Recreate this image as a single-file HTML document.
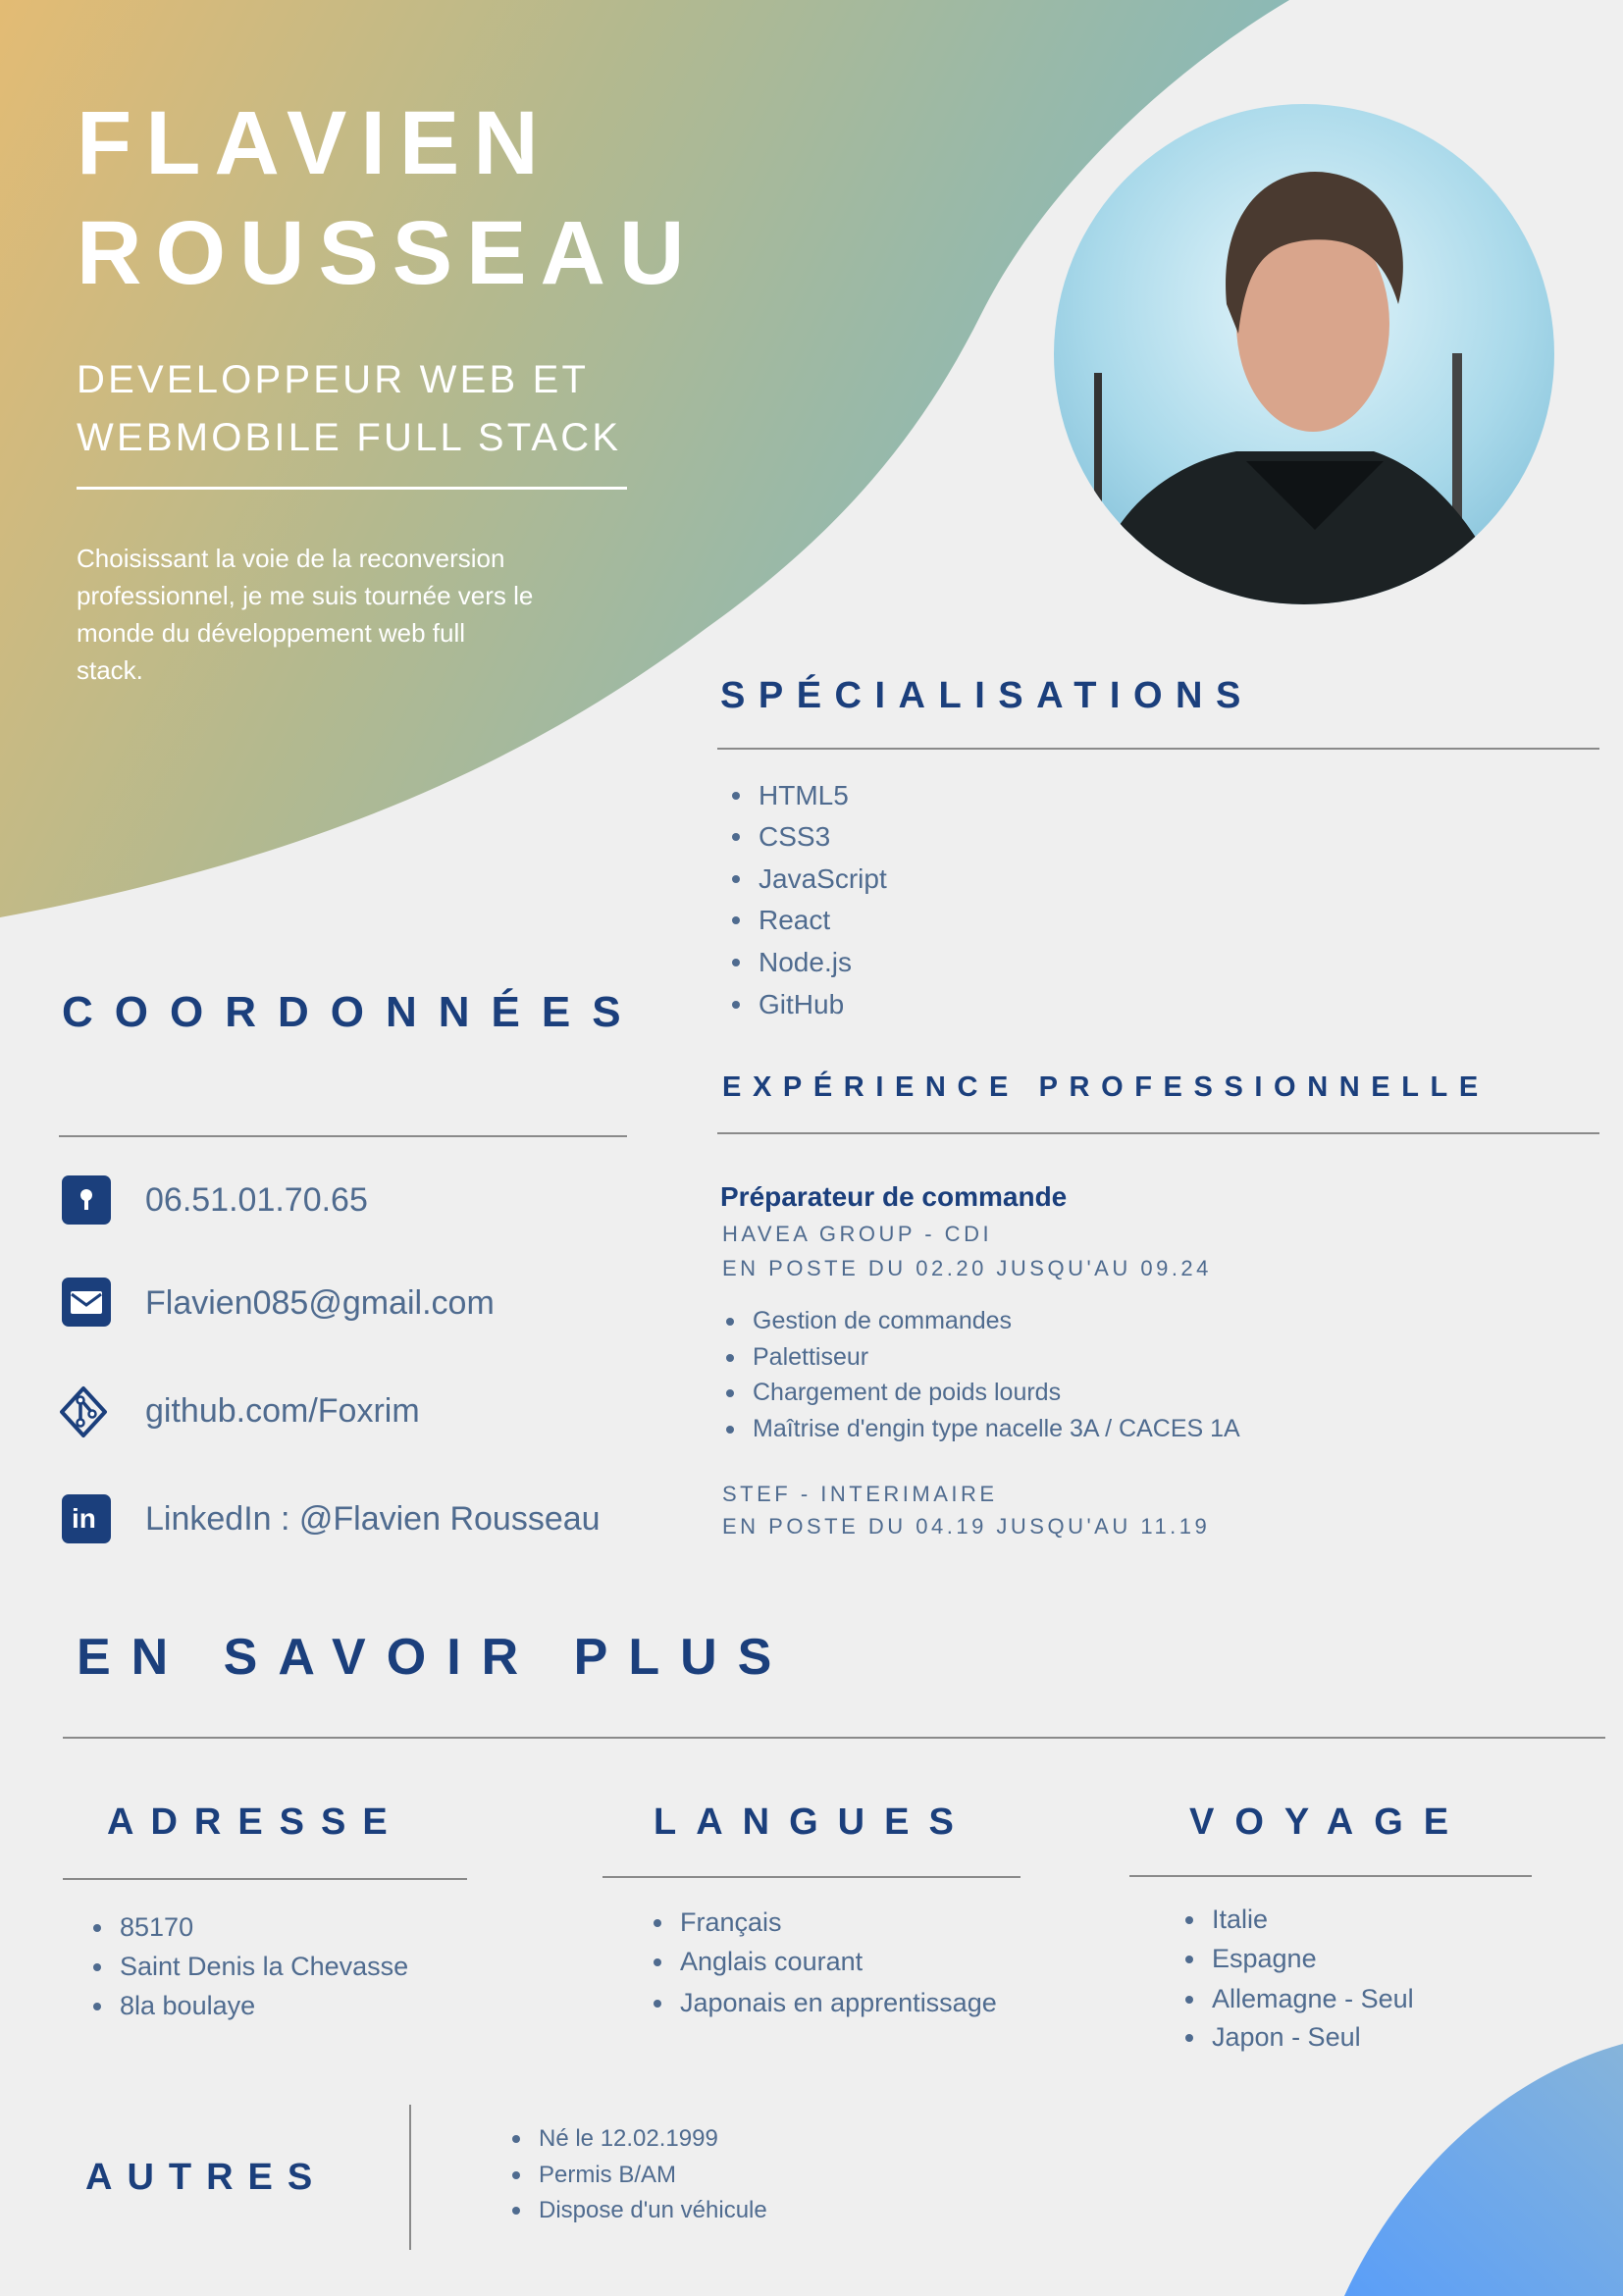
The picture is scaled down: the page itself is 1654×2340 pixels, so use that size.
<!DOCTYPE html>
<html><head><meta charset="utf-8"><style>
*{margin:0;padding:0;box-sizing:border-box}
body{width:1654px;height:2340px;background:#efefef;position:relative;overflow:hidden;font-family:"Liberation Sans",sans-serif}
.a{position:absolute;white-space:nowrap;line-height:1}
.h{color:#1b3f7c;font-weight:bold}
.t{color:#4f6b8f}
.w{color:#fff}
.ln{position:absolute;height:2px;background:#8a8a8a}
.li{position:absolute;white-space:nowrap;line-height:1;color:#4f6b8f}
.li:before{content:"";position:absolute;left:-27px;top:50%;width:8px;height:8px;margin-top:-4px;border-radius:50%;background:#4f6b8f}
.ic{position:absolute;left:63px;width:50px;height:50px;border-radius:7px;background:#1b3f7c}
</style></head><body>
<svg class="a" style="left:0;top:0" width="1654" height="2340">
<defs>
<linearGradient id="g" x1="0" y1="0" x2="1" y2="0.35">
<stop offset="0" stop-color="#e3bb74"/><stop offset="0.45" stop-color="#b3b98f"/><stop offset="1" stop-color="#82b9bf"/></linearGradient>
<linearGradient id="b" x1="0" y1="1" x2="1" y2="0">
<stop offset="0" stop-color="#5a9ef8"/><stop offset="1" stop-color="#86b4da"/></linearGradient>
<radialGradient id="p" cx="0.5" cy="0.4" r="0.6"><stop offset="0" stop-color="#e6f6fb"/><stop offset="0.7" stop-color="#a9d9ea"/><stop offset="1" stop-color="#8cc6dd"/></radialGradient>
<clipPath id="c"><circle cx="1329" cy="361" r="255"/></clipPath>
</defs>
<path d="M0,0 H1314 C1180,80 1060,200 1000,320 C940,440 860,540 720,640 C560,760 350,870 0,935 Z" fill="url(#g)"/>
<path d="M1370,2340 C1420,2230 1520,2120 1654,2083 V2340 Z" fill="url(#b)"/>
<g clip-path="url(#c)">
<rect x="1070" y="100" width="520" height="520" fill="url(#p)"/>
<rect x="1115" y="380" width="8" height="150" fill="#333"/><rect x="1480" y="360" width="10" height="170" fill="#444"/>
<path d="M1110,620 C1120,520 1200,470 1260,460 L1400,460 C1460,480 1510,540 1540,620 Z" fill="#1c2224"/>
<ellipse cx="1338" cy="330" rx="78" ry="110" fill="#d9a58c"/>
<path d="M1250,310 C1240,200 1310,160 1370,180 C1420,195 1440,250 1425,310 C1410,260 1380,240 1330,245 C1290,250 1270,270 1262,340 Z" fill="#4a3a30"/>
<path d="M1270,470 L1410,470 L1340,540 Z" fill="#0f1315"/>
</g>
</svg>

<div class="a w" style="left:78px;top:100px;font-size:92px;font-weight:bold;letter-spacing:14px">FLAVIEN</div>
<div class="a w" style="left:78px;top:212px;font-size:92px;font-weight:bold;letter-spacing:14px">ROUSSEAU</div>
<div class="a w" style="left:78px;top:367px;font-size:40px;letter-spacing:3.2px">DEVELOPPEUR WEB ET</div>
<div class="a w" style="left:78px;top:426px;font-size:40px;letter-spacing:3.2px">WEBMOBILE FULL STACK</div>
<div style="position:absolute;left:78px;top:496px;width:561px;height:3px;background:#fff"></div>
<div class="a w" style="left:78px;top:550px;font-size:26px;line-height:38px">Choisissant la voie de la reconversion<br>professionnel, je me suis tournée vers le<br>monde du développement web full<br>stack.</div>

<div class="a h" style="left:734px;top:690px;font-size:38px;letter-spacing:13.5px">SPÉCIALISATIONS</div>
<div class="ln" style="left:731px;top:762px;width:899px"></div>
<div class="li" style="left:773px;top:797px;font-size:28px">HTML5</div>
<div class="li" style="left:773px;top:839px;font-size:28px">CSS3</div>
<div class="li" style="left:773px;top:882px;font-size:28px">JavaScript</div>
<div class="li" style="left:773px;top:924px;font-size:28px">React</div>
<div class="li" style="left:773px;top:967px;font-size:28px">Node.js</div>
<div class="li" style="left:773px;top:1010px;font-size:28px">GitHub</div>

<div class="a h" style="left:736px;top:1094px;font-size:29px;letter-spacing:11.6px">EXPÉRIENCE PROFESSIONNELLE</div>
<div class="ln" style="left:731px;top:1154px;width:899px"></div>
<div class="a h" style="left:734px;top:1206px;font-size:28px">Préparateur de commande</div>
<div class="a t" style="left:736px;top:1247px;font-size:22px;letter-spacing:3.5px">HAVEA GROUP - CDI</div>
<div class="a t" style="left:736px;top:1282px;font-size:22px;letter-spacing:3.5px">EN POSTE DU 02.20 JUSQU'AU 09.24</div>
<div class="li" style="left:767px;top:1334px;font-size:25px">Gestion de commandes</div>
<div class="li" style="left:767px;top:1371px;font-size:25px">Palettiseur</div>
<div class="li" style="left:767px;top:1407px;font-size:25px">Chargement de poids lourds</div>
<div class="li" style="left:767px;top:1444px;font-size:25px">Maîtrise d'engin type nacelle 3A / CACES 1A</div>
<div class="a t" style="left:736px;top:1512px;font-size:22px;letter-spacing:3.5px">STEF - INTERIMAIRE</div>
<div class="a t" style="left:736px;top:1545px;font-size:22px;letter-spacing:3.5px">EN POSTE DU 04.19 JUSQU'AU 11.19</div>

<div class="a h" style="left:63px;top:1010px;font-size:44px;letter-spacing:22px">COORDONNÉES</div>
<div class="ln" style="left:60px;top:1157px;width:579px"></div>
<div class="ic" style="top:1198px"><svg width="50" height="50"><circle cx="25" cy="20" r="6" fill="#fff"/><rect x="23" y="24" width="4" height="11" fill="#fff"/></svg></div>
<div class="a t" style="left:148px;top:1206px;font-size:34px">06.51.01.70.65</div>
<div class="ic" style="top:1302px"><svg width="50" height="50"><rect x="9" y="14" width="32" height="23" rx="2" fill="#fff"/><path d="M10,17 L25,28 L40,17" stroke="#1b3f7c" stroke-width="3" fill="none"/></svg></div>
<div class="a t" style="left:148px;top:1311px;font-size:34px">Flavien085@gmail.com</div>
<svg class="a" style="left:60px;top:1412px" width="50" height="54"><path d="M25,3 L47,27 L25,51 L3,27 Z" stroke="#1b3f7c" stroke-width="4" fill="none" stroke-linejoin="round"/><path d="M22,14 L35,29 M22,14 L22,38" stroke="#1b3f7c" stroke-width="3.5"/><circle cx="22" cy="15" r="3.5" fill="#fff" stroke="#1b3f7c" stroke-width="2.5"/><circle cx="34" cy="29" r="3.5" fill="#fff" stroke="#1b3f7c" stroke-width="2.5"/><circle cx="22" cy="38" r="3.5" fill="#fff" stroke="#1b3f7c" stroke-width="2.5"/></svg>
<div class="a t" style="left:148px;top:1421px;font-size:34px">github.com/Foxrim</div>
<div class="ic" style="top:1523px"><span class="a" style="left:10px;top:11px;color:#fff;font-weight:bold;font-size:28px">in</span></div>
<div class="a t" style="left:148px;top:1531px;font-size:34px">LinkedIn : @Flavien Rousseau</div>

<div class="a h" style="left:78px;top:1663px;font-size:52px;letter-spacing:21px">EN SAVOIR PLUS</div>
<div class="ln" style="left:64px;top:1770px;width:1572px"></div>

<div class="a h" style="left:109px;top:1838px;font-size:38px;letter-spacing:17px">ADRESSE</div>
<div class="a h" style="left:666px;top:1838px;font-size:38px;letter-spacing:20px">LANGUES</div>
<div class="a h" style="left:1212px;top:1838px;font-size:38px;letter-spacing:21px">VOYAGE</div>
<div class="ln" style="left:64px;top:1914px;width:412px"></div>
<div class="ln" style="left:614px;top:1912px;width:426px"></div>
<div class="ln" style="left:1151px;top:1911px;width:410px"></div>

<div class="li" style="left:122px;top:1951px;font-size:27px">85170</div>
<div class="li" style="left:122px;top:1991px;font-size:27px">Saint Denis la Chevasse</div>
<div class="li" style="left:122px;top:2031px;font-size:27px">8la boulaye</div>
<div class="li" style="left:693px;top:1946px;font-size:27px">Français</div>
<div class="li" style="left:693px;top:1986px;font-size:27px">Anglais courant</div>
<div class="li" style="left:693px;top:2028px;font-size:27px">Japonais en apprentissage</div>
<div class="li" style="left:1235px;top:1943px;font-size:27px">Italie</div>
<div class="li" style="left:1235px;top:1983px;font-size:27px">Espagne</div>
<div class="li" style="left:1235px;top:2024px;font-size:27px">Allemagne - Seul</div>
<div class="li" style="left:1235px;top:2063px;font-size:27px">Japon - Seul</div>

<div class="a h" style="left:87px;top:2200px;font-size:38px;letter-spacing:15px">AUTRES</div>
<div style="position:absolute;left:417px;top:2145px;width:2px;height:148px;background:#8a8a8a"></div>
<div class="li" style="left:549px;top:2168px;font-size:24px">Né le 12.02.1999</div>
<div class="li" style="left:549px;top:2205px;font-size:24px">Permis B/AM</div>
<div class="li" style="left:549px;top:2241px;font-size:24px">Dispose d'un véhicule</div>
</body></html>
